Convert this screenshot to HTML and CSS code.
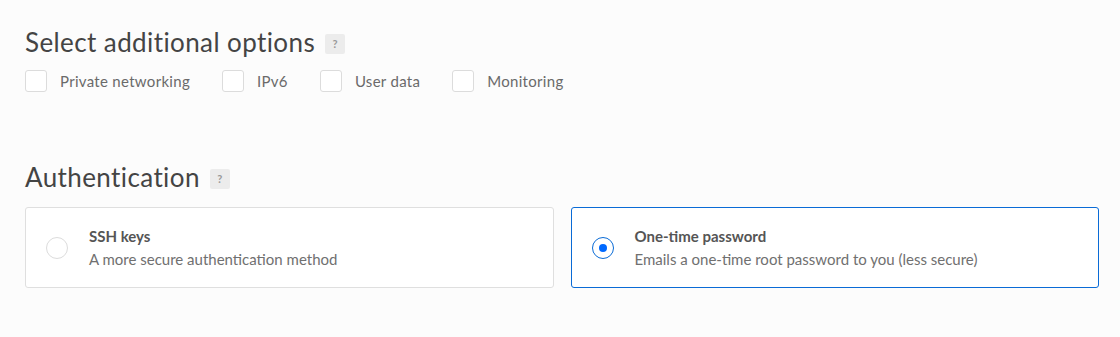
FILE: index.html
```html
<!DOCTYPE html>
<html lang="en">
<head>
    <meta charset="UTF-8">
    <meta name="viewport" content="width=device-width, initial-scale=1.0">
    <title>Create droplet</title>
    <link rel="stylesheet" href="styles.css">
</head>
<body>
    <div class="page">
        <section class="section">
            <h2 class="section-title">Select additional options <span class="help">?</span></h2>
            <div class="options">
                <label class="option"><span class="checkbox"></span>Private networking</label>
                <label class="option"><span class="checkbox"></span>IPv6</label>
                <label class="option"><span class="checkbox"></span>User data</label>
                <label class="option"><span class="checkbox"></span>Monitoring</label>
            </div>
        </section>

        <section class="section section-auth">
            <h2 class="section-title">Authentication <span class="help">?</span></h2>
            <div class="auth-cards">
                <div class="auth-card">
                    <span class="radio"></span>
                    <div class="auth-text">
                        <div class="auth-name">SSH keys</div>
                        <div class="auth-desc">A more secure authentication method</div>
                    </div>
                </div>
                <div class="auth-card selected">
                    <span class="radio"></span>
                    <div class="auth-text">
                        <div class="auth-name">One-time password</div>
                        <div class="auth-desc">Emails a one-time root password to you (less secure)</div>
                    </div>
                </div>
            </div>
        </section>
    </div>
</body>
</html>
```

FILE: styles.css
```css
body {
    margin: 0;
    background: #fcfcfc;
    font-family: "Lato", "Open Sans", sans-serif;
    color: #444;
}
.page {
    padding: 26px 21px 0 25px;
}
.section-title {
    margin: 0;
    font-size: 26px;
    font-weight: 400;
    letter-spacing: 0.4px;
    line-height: 32px;
    color: #444;
    display: flex;
    align-items: center;
    gap: 10px;
}
.help {
    display: inline-flex;
    align-items: center;
    justify-content: center;
    width: 20px;
    height: 20px;
    margin-top: 3px;
    border-radius: 2px;
    background: #ececec;
    color: #999;
    font-size: 11px;
    font-weight: 700;
    letter-spacing: 0;
}
.options {
    display: flex;
    gap: 32px;
    margin-top: 12px;
}
.option {
    display: flex;
    align-items: center;
    gap: 13px;
    font-size: 15px;
    letter-spacing: 0.3px;
    color: #6a6a6a;
}
.checkbox {
    width: 20px;
    height: 20px;
    border: 1px solid #dcdcdc;
    border-radius: 3px;
    background: #fff;
}
.section-auth {
    margin-top: 69px;
}
.auth-cards {
    display: flex;
    gap: 17px;
    margin-top: 14px;
}
.auth-card {
    flex: 1;
    height: 79px;
    display: flex;
    align-items: center;
    padding: 0 20px;
    background: #fff;
    border: 1px solid #dfdfdf;
    border-radius: 3px;
}
.auth-card.selected {
    border-color: #0a6bd6;
}
.radio {
    width: 20px;
    height: 20px;
    border: 1px solid #dcdcdc;
    border-radius: 50%;
    display: flex;
    align-items: center;
    justify-content: center;
    margin-right: 21px;
    flex-shrink: 0;
}
.selected .radio {
    border-color: #0a6bd6;
}
.selected .radio::after {
    content: "";
    width: 8px;
    height: 8px;
    border-radius: 50%;
    background: #0069ff;
}
.auth-name {
    font-size: 15px;
    font-weight: 700;
    color: #555;
    line-height: 20px;
}
.auth-desc {
    margin-top: 3px;
    font-size: 15px;
    color: #707070;
    line-height: 20px;
}
```
